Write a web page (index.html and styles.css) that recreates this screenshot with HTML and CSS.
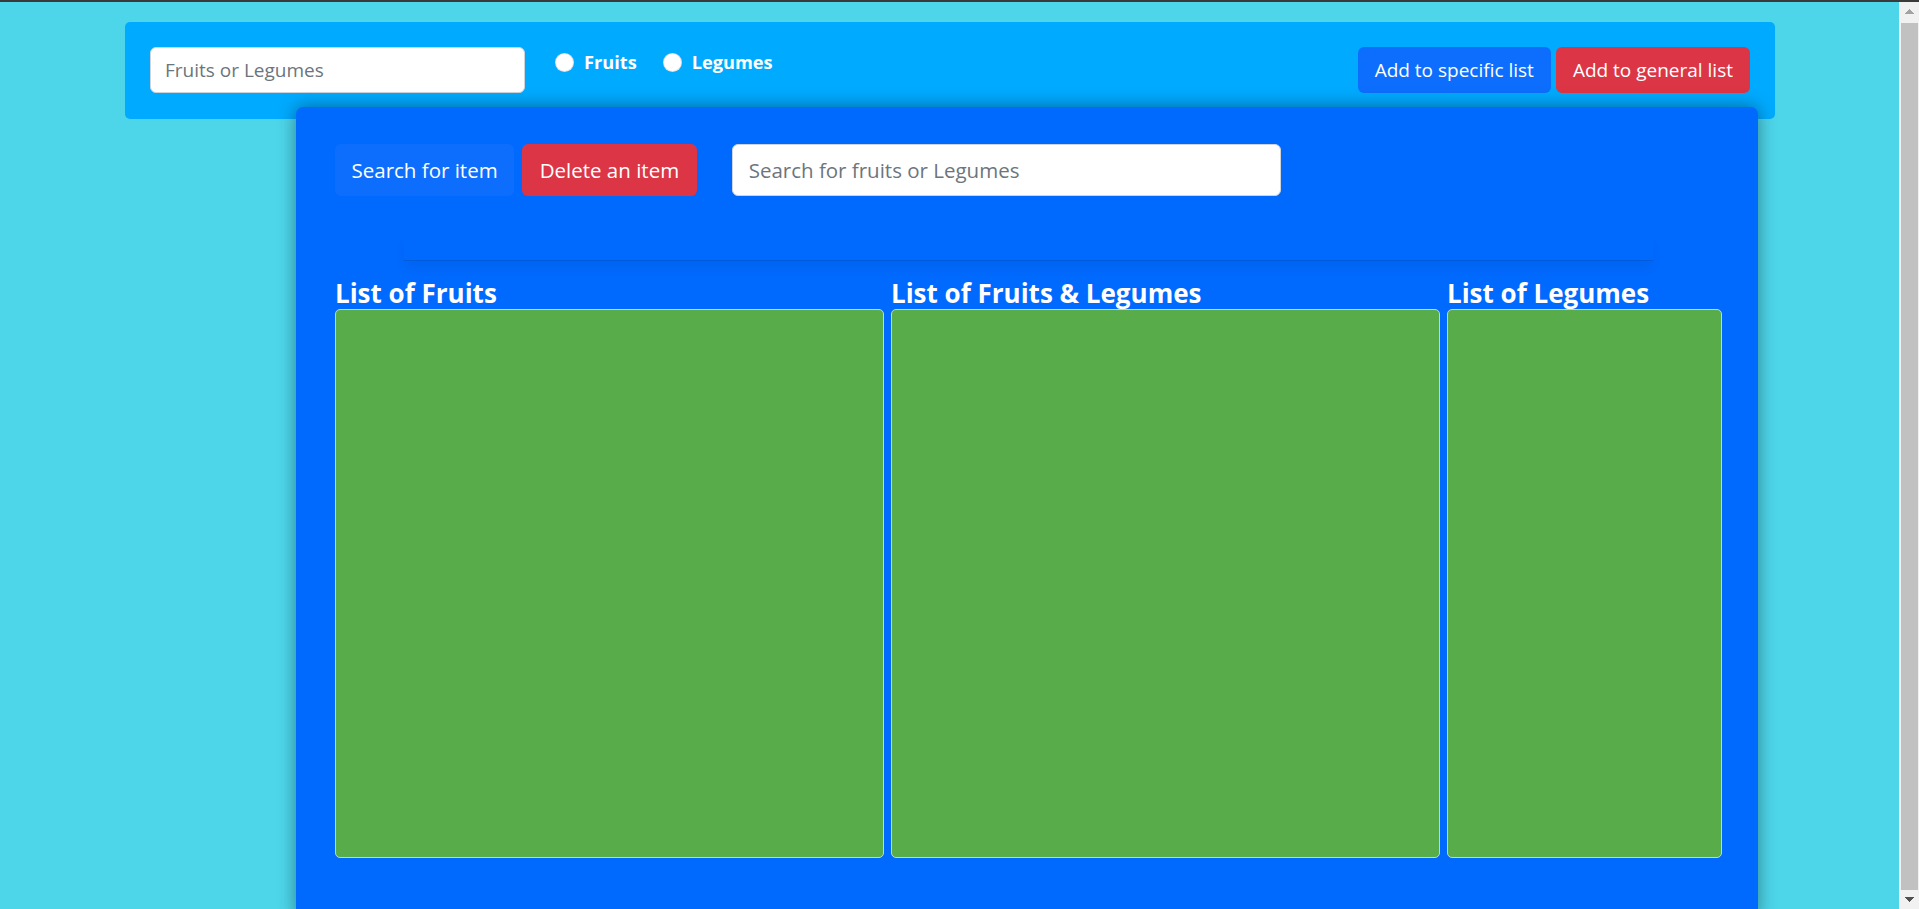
FILE: index.html
```html
<!DOCTYPE html>
<html lang="en">
<head>
<meta charset="utf-8">
<title>Fruits &amp; Legumes</title>
<link rel="stylesheet" href="styles.css">
</head>
<body>
<div class="frame-top"></div>
<header class="topbar">
  <input class="field field-top" type="text" placeholder="Fruits or Legumes">
  <div class="radios">
    <label class="radio"><input type="radio" name="kind"><span>Fruits</span></label>
    <label class="radio"><input type="radio" name="kind"><span>Legumes</span></label>
  </div>
  <div class="actions">
    <button class="btn btn-primary">Add to specific list</button>
    <button class="btn btn-danger">Add to general list</button>
  </div>
</header>
<main class="panel">
  <div class="toolbar">
    <button class="btn btn-lg btn-primary">Search for item</button>
    <button class="btn btn-lg btn-danger btn-delete">Delete an item</button>
    <input class="field field-lg" type="text" placeholder="Search for fruits or Legumes">
  </div>
  <div class="divider"></div>
  <div class="lists">
    <section class="list list-wide">
      <h3 class="list-title">List of Fruits</h3>
      <div class="box"></div>
    </section>
    <section class="list list-wide">
      <h3 class="list-title">List of Fruits &amp; Legumes</h3>
      <div class="box"></div>
    </section>
    <section class="list list-narrow">
      <h3 class="list-title">List of Legumes</h3>
      <div class="box"></div>
    </section>
  </div>
</main>
<div class="scrollbar" aria-hidden="true">
  <span class="sb-arrow sb-up"></span>
  <span class="sb-thumb"></span>
  <span class="sb-arrow sb-down"></span>
</div>
</body>
</html>
```
FILE: styles.css
```css
html, body {
  margin: 0;
  padding: 0;
}

body {
  background: #4dd5ea;
  font-family: "Open Sans", "Noto Sans", sans-serif;
}

.frame-top {
  height: 2px;
  background: #3a3a3a;
}

/* window scrollbar, drawn over the right edge */
.scrollbar {
  position: fixed;
  top: 2px;
  right: 0;
  bottom: 0;
  z-index: 5;
  display: flex;
  flex-direction: column;
  width: 20px;
  background: #f1f1f1;
}
.sb-arrow {
  display: block;
  height: 19px;
  flex: none;
}
.sb-up {
  background: conic-gradient(from 135deg at 50% 0, #a3a3a3 90deg, transparent 0) center / 9px 5px no-repeat;
}
.sb-down {
  background: conic-gradient(from -45deg at 50% 100%, #505050 90deg, transparent 0) center / 9px 5px no-repeat;
}
.sb-thumb {
  flex: 1;
  margin: 2px 1px 0 2px;
  background: #c1c1c1;
}

.topbar {
  display: flex;
  align-items: flex-start;
  box-sizing: border-box;
  width: 1650px;
  margin: 20px 0 0 125px;
  padding: 25px 25px 26px;
  background: #00aaff;
  border-radius: 5px;
}

.field {
  box-sizing: border-box;
  margin: 0;
  background: #fff;
  border: 1px solid #ced4da;
  border-radius: 6px;
  font-family: "Open Sans", "Noto Sans", sans-serif;
  color: #212529;
  outline: none;
}
.field::placeholder {
  color: #6c757d;
}

.field-top {
  width: 375px;
  height: 46px;
  padding: 0 14px;
  font-size: 19px;
}

.radios {
  display: flex;
  gap: 26px;
  margin: 2px 0 0 30px;
}

.radio {
  display: flex;
  align-items: center;
  gap: 10px;
  color: #fff;
  font-weight: 700;
  font-size: 18.2px;
  line-height: 27px;
}
.radio input {
  appearance: none;
  -webkit-appearance: none;
  box-sizing: border-box;
  width: 19px;
  height: 19px;
  margin: 0;
  border-radius: 50%;
  background: #fff;
  border: 1px solid rgba(0, 0, 0, 0.12);
}

.actions {
  display: flex;
  gap: 5px;
  margin-left: auto;
}

.btn {
  box-sizing: border-box;
  height: 46px;
  margin: 0;
  padding: 0 17px;
  border: 0;
  border-radius: 6px;
  color: #fff;
  font-family: "Open Sans", "Noto Sans", sans-serif;
  font-size: 19px;
  line-height: 1.5;
  white-space: nowrap;
}
.btn-primary {
  background: #0d6efd;
}
.btn-danger {
  background: #dc3545;
}
.btn-lg {
  height: 52px;
  padding: 0 16.5px;
  font-size: 20.5px;
}
.btn-delete {
  margin-left: 8px;
  padding: 0 17.5px;
}

.panel {
  position: relative;
  z-index: 1;
  box-sizing: border-box;
  width: 1462px;
  margin: -12px 0 0 296px;
  padding: 37px 36px 60px 39px;
  background: #006aff;
  border-radius: 7px;
  box-shadow: 0 0 18px rgba(0, 0, 0, 0.4);
}

.toolbar {
  display: flex;
  align-items: center;
}

.field-lg {
  width: 549px;
  height: 52px;
  margin-left: 35px;
  padding: 0 16px;
  font-size: 20.5px;
}

.divider {
  box-sizing: border-box;
  width: 90%;
  height: 26px;
  margin: 39px auto 0;
  border-bottom: 1px solid rgba(0, 0, 0, 0.14);
  box-shadow: 0 8px 14px rgba(0, 0, 0, 0.06);
}

.lists {
  display: flex;
  gap: 7px;
  margin-top: 16px;
}

.list-wide {
  width: 549px;
}
.list-narrow {
  width: 275px;
}

.list-title {
  margin: 0;
  color: #fff;
  font-size: 26px;
  font-weight: 700;
  line-height: 32px;
  white-space: nowrap;
}

.box {
  box-sizing: border-box;
  height: 549px;
  background: #58ad4a;
  border: 1px solid #cfcfcf;
  border-radius: 5px;
}
```
